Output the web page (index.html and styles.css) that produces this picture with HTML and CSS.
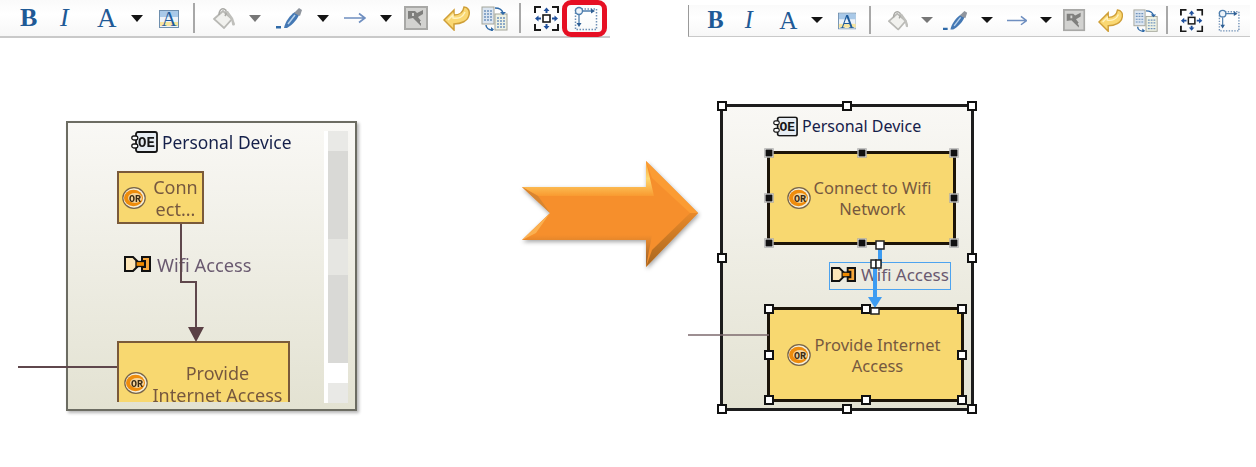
FILE: index.html
```html
<!DOCTYPE html>
<html lang="en">
<head>
  <meta charset="UTF-8">
  <title>Routing mode</title>
  <link rel="stylesheet" href="styles.css">
</head>
<body>
  <svg class="defs" width="0" height="0">
    <symbol id="hl" viewBox="0 0 20 19">
      <rect x="0.5" y="1.500" width="19" height="17" fill="#eef3f8" stroke="#6f8fae"/>
      <rect x="1" y="2" width="18" height="6" fill="#a9c9e8"/>
      <rect x="1" y="13" width="18" height="4" fill="#f8e6a0"/>
    </symbol>
    <symbol id="bucket" viewBox="0 0 22 22">
      <path d="M1 12 10 4l9 8-8 9Z" fill="#f1f1ee" stroke="#b9b9b5" stroke-width="1.800"/>
      <path d="M6 8c0-4 2-7 5-6s3 4 1 7" fill="none" stroke="#a9a9a5" stroke-width="1.600"/>
      <path d="M12 4h3l5 7 2 6c0 2-3 2-3 0l-1-5Z" fill="#c0c0bc"/>
    </symbol>
    <symbol id="pen" viewBox="0 0 27 22">
      <path d="M0 19h5v2.500H0Z" fill="#2f6aa8"/>
      <path d="M8 21c1-6 6-13 11-16l4 3c-2 5-7 10-12 13Z" fill="#4478b4"/>
      <path d="M18 6l5-5 3 2-2 6Z" fill="#8f959e"/>
      <path d="M12 17l7-9" stroke="#b8d2ec" stroke-width="1.500"/>
    </symbol>
    <symbol id="thin-arrow" viewBox="0 0 22 12">
      <path d="M0 6h20M15 1.500 21 6l-6 4.500" fill="none" stroke="#6f8fc0" stroke-width="1.600"/>
    </symbol>
    <symbol id="map" viewBox="0 0 24 24">
      <rect x="1" y="1" width="22" height="22" fill="#d2d2d0" stroke="#a8a8a6" stroke-width="2"/>
      <path d="M4 5h7l2 2 6-3v4l-5 3 3 4v5l-5-5-3-3-5 1Z" fill="#7f7f7d"/>
      <path d="M8 7h2v3H8ZM16 15h2v2h-2Z" fill="#d2d2d0"/>
    </symbol>
    <symbol id="back" viewBox="0 0 27 25">
      <path d="M1 14 11 4V9C16 9 20 7 21 1 25 1 27 5 26 9 25 15 18 18 11 18V24Z" fill="#fad873" stroke="#cf9f38" stroke-width="1.500"/>
      <path d="M5 14l5-5v3c5 1 10-1 12-6" fill="none" stroke="#fff2c0" stroke-width="1.500"/>
    </symbol>
    <symbol id="copy" viewBox="0 0 27 25">
      <rect x="1" y="1" width="12" height="17" fill="#dbe5f0" stroke="#a4a59a"/>
      <path d="M3 5h8M3 8h8M3 11h8M3 14h8" stroke="#6f93bd" stroke-width="1.300" stroke-dasharray="2 1"/>
      <rect x="14" y="8" width="12" height="16" fill="#eef2e4" stroke="#a4a59a"/>
      <path d="M16 12h8M16 15h8M16 18h8M16 21h8" stroke="#6f93bd" stroke-width="1.300" stroke-dasharray="2 1"/>
      <path d="M14 2c4 0 7 1 8 5M5 19c0 3 3 5 7 5" fill="none" stroke="#2f6aa8" stroke-width="1.500"/>
      <path d="M19 6h6l-3 3ZM10 21v5l3-2.500Z" fill="#2f6aa8"/>
    </symbol>
    <symbol id="fit" viewBox="0 0 25 25">
      <path d="M1 7V1h6M18 1h6v6M24 18v6h-6M7 24H1v-6" fill="none" stroke="#1a1a1a" stroke-width="2"/>
      <rect x="9" y="9" width="7" height="7" fill="#fff" stroke="#1a1a1a" stroke-width="1.600"/>
      <path d="M12.500 1.500 15.500 5h-2v2h-2V5h-2ZM12.500 23.500 15.500 20h-2v-2h-2v2h-2ZM1 12.500 4.500 9.500v2H7v2H4.500v2ZM24 12.500 20.500 9.500v2H18v2h2.500v2Z" fill="#1e4f9c"/>
    </symbol>
    <symbol id="route" viewBox="0 0 24 25">
      <rect x="1.500" y="3" width="21" height="20.500" fill="none" stroke="#6e8fb5" stroke-width="1.500" stroke-dasharray="1.500 1.500"/>
      <circle cx="5" cy="5" r="3.500" fill="#eef4fa" stroke="#4f7fae" stroke-width="1.400"/>
      <path d="M8 5h10M5 9v9" stroke="#4f7fae" stroke-width="1.300"/>
      <path d="M17 2.500 21 5l-4 2.500ZM2.500 17 5 21l2.500-4Z" fill="#2f5f94"/>
    </symbol>
    <symbol id="oe" viewBox="0 0 27 22">
      <rect x="5" y="1" width="21" height="20" rx="2" fill="#e6ecf2" stroke="#161616" stroke-width="1.800"/>
      <rect x="0.800" y="5" width="6" height="4" rx="2" fill="#fff" stroke="#161616" stroke-width="1.300"/>
      <rect x="0.800" y="13" width="6" height="4" rx="2" fill="#fff" stroke="#161616" stroke-width="1.300"/>
    </symbol>
    <symbol id="or" viewBox="0 0 24 22">
      <ellipse cx="12" cy="11" rx="11.200" ry="10.300" fill="#f6efd8" stroke="#75634a" stroke-width="1.200"/>
      <ellipse cx="11.500" cy="11" rx="9.500" ry="8.200" fill="#ee8c0c"/>
      <ellipse cx="13" cy="11" rx="7" ry="5" fill="#f6d49a"/>
    </symbol>
    <symbol id="port" viewBox="0 0 27 16">
      <path d="M1 1H9L14 6V10L9 15H1Z" fill="#fde6b8" stroke="#111" stroke-width="2"/>
      <rect x="12" y="5.500" width="9" height="5" fill="#f08a00" stroke="#111" stroke-width="1.300"/>
      <path d="M18 1H26V15H18V11H21V5H18Z" fill="#f7a73c" stroke="#111" stroke-width="2"/>
    </symbol>
    <linearGradient id="band-top" x1="0" y1="0" x2="0" y2="1">
      <stop offset="0" stop-color="#f8a33a"/>
      <stop offset="0.5" stop-color="#fed76f"/>
      <stop offset="1" stop-color="#f99a30"/>
    </linearGradient>
    <linearGradient id="band-bottom" x1="0" y1="0" x2="0" y2="1">
      <stop offset="0" stop-color="#f68f2c"/>
      <stop offset="1" stop-color="#8e5c2a"/>
    </linearGradient>
    <linearGradient id="head-low" x1="0" y1="0" x2="0" y2="1">
      <stop offset="0" stop-color="#e8892a"/>
      <stop offset="1" stop-color="#a8661e"/>
    </linearGradient>
  </svg>

  <div class="page">
    <div class="toolbars">
      <div class="toolbar first">
        <span class="tool-b">B</span>
        <span class="tool-i">I</span>
        <span class="tool-a">A</span>
        <span class="drop"></span>
        <svg class="ic ic-hl" viewBox="0 -3 20 25"><use href="#hl" width="20" height="19"/><text x="10" y="17" class="hl-letter">A</text></svg>
        <span class="sep"></span>
        <svg class="ic ic-bucket"><use href="#bucket"/></svg>
        <span class="drop grey"></span>
        <svg class="ic ic-pen"><use href="#pen"/></svg>
        <span class="drop"></span>
        <svg class="ic ic-arrow"><use href="#thin-arrow"/></svg>
        <span class="drop"></span>
        <svg class="ic ic-map"><use href="#map"/></svg>
        <svg class="ic ic-back"><use href="#back"/></svg>
        <svg class="ic ic-copy"><use href="#copy"/></svg>
        <span class="sep sep-end"></span>
        <svg class="ic ic-fit"><use href="#fit"/></svg>
        <span class="marked">
          <svg class="ic ic-route"><use href="#route"/></svg>
        </span>
      </div>
      <div class="toolbar second">
        <span class="tool-b">B</span>
        <span class="tool-i">I</span>
        <span class="tool-a">A</span>
        <span class="drop"></span>
        <svg class="ic ic-hl" viewBox="0 -3 20 25"><use href="#hl" width="20" height="19"/><text x="10" y="17" class="hl-letter">A</text></svg>
        <span class="sep"></span>
        <svg class="ic ic-bucket"><use href="#bucket"/></svg>
        <span class="drop grey"></span>
        <svg class="ic ic-pen"><use href="#pen"/></svg>
        <span class="drop"></span>
        <svg class="ic ic-arrow"><use href="#thin-arrow"/></svg>
        <span class="drop"></span>
        <svg class="ic ic-map"><use href="#map"/></svg>
        <svg class="ic ic-back"><use href="#back"/></svg>
        <svg class="ic ic-copy"><use href="#copy"/></svg>
        <span class="sep sep-end"></span>
        <svg class="ic ic-fit"><use href="#fit"/></svg>
        <svg class="ic ic-route"><use href="#route"/></svg>
      </div>
    </div>

    <!-- before -->
    <div class="frame before"></div>
    <div class="scrollbar">
      <div class="sb-btn"></div>
      <div class="sb-track"></div>
      <div class="sb-thumb"></div>
      <div class="sb-track"></div>
      <div class="sb-gap"></div>
      <div class="sb-btn"></div>
    </div>
    <div class="title before-title">
      <svg class="oe" viewBox="0 0 27 22"><use href="#oe"/><text x="15.500" y="16" class="oe-letters">OE</text></svg>Personal Device
    </div>
    <div class="box conn-small">
      <svg class="or" viewBox="0 0 24 22"><use href="#or"/><text x="13" y="14.500" class="or-letters">OR</text></svg>
      <div class="box-text">Conn<br>ect...</div>
    </div>
    <div class="box provide-small">
      <svg class="or" viewBox="0 0 24 22"><use href="#or"/><text x="13" y="14.500" class="or-letters">OR</text></svg>
      <div class="box-text">Provide<br>Internet Access</div>
    </div>
    <div class="flow before-flow"><svg class="port"><use href="#port"/></svg>Wifi Access</div>

    <!-- after -->
    <div class="frame after">
      <i class="handle tl"></i><i class="handle tc"></i><i class="handle tr"></i>
      <i class="handle ml"></i><i class="handle mr"></i>
      <i class="handle bl"></i><i class="handle bc"></i><i class="handle br"></i>
    </div>
    <div class="title after-title">
      <svg class="oe" viewBox="0 0 27 22"><use href="#oe"/><text x="15.500" y="16" class="oe-letters">OE</text></svg>Personal Device
    </div>
    <div class="box conn-big selected">
      <svg class="or" viewBox="0 0 24 22"><use href="#or"/><text x="13" y="14.500" class="or-letters">OR</text></svg>
      <div class="box-text">Connect to Wifi<br>Network</div>
      <i class="handle solid tl"></i><i class="handle solid tc"></i><i class="handle solid tr"></i>
      <i class="handle solid ml"></i><i class="handle solid mr"></i>
      <i class="handle solid bl"></i><i class="handle solid bc"></i><i class="handle solid br"></i>
    </div>
    <div class="box provide-big selected">
      <svg class="or" viewBox="0 0 24 22"><use href="#or"/><text x="13" y="14.500" class="or-letters">OR</text></svg>
      <div class="box-text">Provide Internet<br>Access</div>
      <i class="handle tl"></i><i class="handle tc"></i><i class="handle tr"></i>
      <i class="handle ml"></i><i class="handle mr"></i>
      <i class="handle bl"></i><i class="handle bc"></i><i class="handle br"></i>
    </div>
    <div class="flow after-flow"><svg class="port"><use href="#port"/></svg>Wifi Access</div>

    <!-- wires and the big arrow -->
    <svg class="wires" width="1256" height="467">
      <path d="M18 367H117" class="wire"/>
      <path d="M181 224V282H196V330" class="wire"/>
      <path d="M188 327H204L196 342Z" fill="#5a4045"/>
      <path d="M688 335H769" class="wire thin"/>

      <path d="M880 248V264H875V298" class="wire-blue"/>
      <path d="M868 297H882L875 308Z" fill="#3d9cf2"/>
      <rect x="876" y="241" width="8" height="8" class="conn-handle"/>
      <rect x="871" y="260" width="5" height="8" class="conn-handle"/>
      <rect x="876" y="260" width="5" height="8" class="conn-handle"/>
      <rect x="871" y="308" width="8" height="6" class="conn-handle"/>

      <g class="big-arrow">
        <path d="M522 187H646V161L698 213L646 267V240H522L550 213Z" fill="#f68f2c"/>
        <path d="M522 187H646V161L654 196H538Z" fill="url(#band-top)"/>
        <path d="M522 240H646V267L652 235H534Z" fill="url(#band-bottom)"/>
        <path d="M646 161L698 213H690L652 178Z" fill="#fb9c33"/>
        <path d="M646 267L698 213H690L652 250Z" fill="url(#head-low)"/>
        <path d="M522 187L550 213L538 196Z" fill="#d88530"/>
        <path d="M522 240L550 213L536 233Z" fill="#fbb050"/>
      </g>
    </svg>
  </div>
</body>
</html>
```

FILE: styles.css
```css
body {
  margin: 0;
  background-color: white;
}

.defs {
  position: absolute;
}

.page {
  position: relative;
  width: 1256px;
  height: 467px;
  overflow: hidden;
  filter: blur(0.4px);
  font-family: "Noto Sans", sans-serif;
}

/* toolbars */
.toolbars {
  display: flex;
  align-items: flex-start;
}

.toolbar {
  display: flex;
  align-items: center;
  box-sizing: border-box;
  background: linear-gradient(#fafafa, #ffffff 40%, #f7f7f7);
  border-bottom: 2px solid #c9c9c9;
}

.first {
  width: 610px;
  height: 38px;
  padding-left: 20px;
  margin-right: 78px;
}

.second {
  zoom: 0.93;
  width: 604px;
  height: 35px;
  margin-top: 5px;
  padding-left: 20px;
  border-left: 2px solid #9a9a9a;
}

.tool-b, .tool-i, .tool-a {
  font-family: "Liberation Serif", serif;
  color: #1f5a96;
  line-height: 1;
}

.tool-b {
  width: 17px;
  font-size: 26px;
  font-weight: bold;
}

.tool-i {
  width: 13px;
  margin-left: 23px;
  font-size: 26px;
  font-style: italic;
}

.tool-a {
  width: 20px;
  margin-left: 24px;
  font-size: 27px;
}

.drop {
  width: 0;
  height: 0;
  margin-left: 14px;
  border-left: 6.500px solid transparent;
  border-right: 6.500px solid transparent;
  border-top: 7px solid #141414;
}

.drop.grey {
  border-top-color: #777;
}

.sep {
  width: 2px;
  height: 30px;
  margin-left: 14px;
  background-color: #a8a8a8;
}

.sep-end {
  margin-left: 11px;
}

.ic {
  display: block;
  flex-shrink: 0;
}

.ic-hl { width: 20px; height: 25px; margin-left: 16px; }
.ic-bucket { width: 22px; height: 22px; margin-left: 18px; }
.ic-pen { width: 27px; height: 22px; margin-left: 15px; }
.ic-arrow { width: 22px; height: 12px; margin-left: 15px; }
.ic-map { width: 24px; height: 24px; margin-left: 12px; }
.ic-back { width: 27px; height: 25px; margin-left: 15px; }
.ic-copy { width: 27px; height: 25px; margin-left: 11px; }
.ic-fit { width: 25px; height: 25px; margin-left: 13px; }
.ic-route { width: 24px; height: 25px; margin-left: 15px; }

.second .ic-pen { margin-left: 10px; }
.second .ic-back { margin-left: 13px; }
.second .sep-end { margin-left: 9px; }

.hl-letter {
  font-family: "Liberation Serif", serif;
  font-size: 21px;
  text-anchor: middle;
  fill: #1f5c9c;
}

.marked {
  position: relative;
  display: block;
}

.marked::after {
  content: "";
  position: absolute;
  left: 3px;
  top: -6px;
  width: 35px;
  height: 27px;
  border: 5px solid #e60f23;
  border-radius: 9px;
}

/* diagram frames */
.frame {
  position: absolute;
  box-sizing: border-box;
  background: linear-gradient(#f9f8f5, #e3e2d2);
}

.before {
  left: 66px;
  top: 121px;
  width: 291px;
  height: 290px;
  border: 2px solid #6c6c62;
  box-shadow: 2px 2px 3px #b5b5b5;
}

.after {
  left: 722px;
  top: 106px;
  width: 250px;
  height: 303px;
  outline: 3px solid #1d1d1d;
  outline-offset: -1.500px;
}

.scrollbar {
  position: absolute;
  left: 324px;
  top: 131px;
  width: 20px;
  height: 272px;
  display: flex;
  flex-direction: column;
  padding-left: 4px;
  background-color: white;
}

.sb-btn { height: 20px; background-color: #e9e9e6; }
.sb-track { height: 88px; background-color: #d9d9d6; }
.sb-thumb { height: 36px; background-color: #e6e6e2; }
.sb-gap { height: 20px; background-color: white; }

.title {
  position: absolute;
  display: flex;
  align-items: center;
  color: #15204a;
  white-space: nowrap;
}

.before-title {
  left: 131px;
  top: 130px;
  height: 24px;
  font-size: 17.400px;
}

.after-title {
  left: 773px;
  top: 114px;
  height: 24px;
  font-size: 16px;
}

.oe {
  width: 27px;
  height: 22px;
  margin-right: 4px;
}

.after-title .oe {
  width: 25px;
  height: 21px;
}

.oe-letters {
  font-family: "Liberation Mono", monospace;
  font-weight: bold;
  font-size: 14px;
  text-anchor: middle;
  fill: #161616;
}

/* action boxes */
.box {
  position: absolute;
  box-sizing: border-box;
  display: flex;
  align-items: center;
  background-color: #f8d870;
  border: 2px solid #7a5a3a;
  color: #76583f;
  line-height: 21px;
  font-size: 16.500px;
}

.box-text {
  flex: 1;
  text-align: center;
  white-space: nowrap;
}

.or {
  width: 24px;
  height: 22px;
  flex-shrink: 0;
}

.or-letters {
  font-family: "Liberation Mono", monospace;
  font-weight: bold;
  font-size: 10px;
  text-anchor: middle;
  fill: #3a2a14;
}

.conn-small {
  left: 117px;
  top: 171px;
  width: 87px;
  height: 53px;
  padding-left: 3px;
  font-size: 18px;
  line-height: 22px;
}

.conn-small .box-text {
  padding-left: 3px;
}

.provide-small {
  left: 117px;
  top: 341px;
  width: 173px;
  height: 61px;
  padding: 19px 1px 0 5px;
  align-items: flex-start;
  border-bottom: 0;
  overflow: hidden;
  font-size: 18px;
  line-height: 22px;
}

.provide-small .or {
  margin-top: 10px;
}

.selected {
  border: 0;
  outline: 3px solid #1c1408;
  outline-offset: -1.500px;
}

.conn-big {
  left: 769px;
  top: 153px;
  width: 185px;
  height: 90px;
  padding: 0 20px 0 18px;
}

.provide-big {
  left: 769px;
  top: 309px;
  width: 193px;
  height: 91px;
  padding: 0 18px 0 18px;
}

/* resize handles */
.handle {
  position: absolute;
  box-sizing: border-box;
  width: 10px;
  height: 10px;
  background-color: white;
  border: 2px solid #111;
  transform: translate(-50%, -50%);
}

.handle.solid {
  width: 9px;
  height: 9px;
  background-color: #111;
  border: 1px solid white;
}

.tl { left: 0; top: 0; }
.tc { left: 50%; top: 0; }
.tr { left: 100%; top: 0; }
.ml { left: 0; top: 50%; }
.mr { left: 100%; top: 50%; }
.bl { left: 0; top: 100%; }
.bc { left: 50%; top: 100%; }
.br { left: 100%; top: 100%; }

/* flow labels */
.flow {
  position: absolute;
  box-sizing: border-box;
  display: flex;
  align-items: center;
  color: #6a5a70;
  font-size: 18.300px;
  white-space: nowrap;
}

.port {
  width: 27px;
  height: 16px;
  margin-right: 6px;
}

.before-flow {
  left: 124px;
  top: 252px;
  height: 24px;
}

.after-flow {
  left: 829px;
  top: 262px;
  width: 122px;
  height: 28px;
  padding: 0 0 3px 1px;
  border: 1px solid #4da3ef;
  font-size: 17px;
}

.after-flow .port {
  width: 25px;
  height: 15px;
  margin-right: 5px;
}

/* wires */
.wires {
  position: absolute;
  left: 0;
  top: 0;
}

.wire {
  fill: none;
  stroke: #5f474c;
  stroke-width: 2;
}

.wire.thin {
  stroke: #7d6a6e;
  stroke-width: 1.500;
}

.wire-blue {
  fill: none;
  stroke: #3d9cf2;
  stroke-width: 4;
}

.conn-handle {
  fill: white;
  stroke: #222;
  stroke-width: 1.500;
}

.big-arrow {
  filter: drop-shadow(1px 2px 2px rgba(0, 0, 0, 0.35));
}
```
